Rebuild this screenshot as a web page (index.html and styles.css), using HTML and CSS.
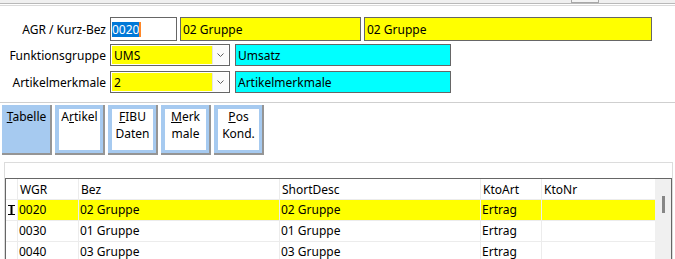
FILE: index.html
```html
<!DOCTYPE html>
<html>
<head>
<meta charset="utf-8">
<link rel="stylesheet" href="styles.css">
</head>
<body>
<div class="topbar"><div class="topthumb"></div></div>
<div class="topline"></div>

<div class="form">
  <div class="row r1">
    <div class="label">AGR / Kurz-Bez</div>
    <div class="edit code"><span class="sel">0020</span><span class="caret"></span></div>
    <div class="edit yellow w1">02 Gruppe</div>
    <div class="edit yellow w2">02 Gruppe</div>
  </div>
  <div class="row r2">
    <div class="label">Funktionsgruppe</div>
    <div class="combo">
      <div class="combo-val">UMS</div>
      <div class="combo-btn"><svg width="7" height="4" viewBox="0 0 7 4"><polyline points="0.5,0.5 3.5,3.5 6.5,0.5" fill="none" stroke="#606060" stroke-width="1"/></svg></div>
    </div>
    <div class="edit cyan">Umsatz</div>
  </div>
  <div class="row r3">
    <div class="label">Artikelmerkmale</div>
    <div class="combo">
      <div class="combo-val">2</div>
      <div class="combo-btn"><svg width="7" height="4" viewBox="0 0 7 4"><polyline points="0.5,0.5 3.5,3.5 6.5,0.5" fill="none" stroke="#606060" stroke-width="1"/></svg></div>
    </div>
    <div class="edit cyan">Artikelmerkmale</div>
  </div>
</div>

<div class="sep"></div>

<div class="tabs">
  <div class="btn active"><div class="btn-in"><u>T</u>abelle</div></div>
  <div class="btn"><div class="btn-in">A<u>r</u>tikel</div></div>
  <div class="btn"><div class="btn-in"><u>F</u>IBU<br>Daten</div></div>
  <div class="btn"><div class="btn-in"><u>M</u>erk<br>male</div></div>
  <div class="btn"><div class="btn-in"><u>P</u>os<br>Kond.</div></div>
</div>

<div class="gridwrap">
  <div class="grid">
    <div class="gcols">
      <div class="grow head">
        <div class="c ind"></div>
        <div class="c">WGR</div>
        <div class="c">Bez</div>
        <div class="c">ShortDesc</div>
        <div class="c">KtoArt</div>
        <div class="c last">KtoNr</div>
      </div>
      <div class="grow cur">
        <div class="c ind"><svg width="7" height="10" viewBox="0 0 7 10"><rect x="0" y="0" width="7" height="1" fill="#000"/><rect x="2.5" y="0" width="2" height="10" fill="#000"/><rect x="0" y="9" width="7" height="1" fill="#000"/></svg></div>
        <div class="c">0020</div>
        <div class="c">02 Gruppe</div>
        <div class="c">02 Gruppe</div>
        <div class="c">Ertrag</div>
        <div class="c last"></div>
      </div>
      <div class="grow">
        <div class="c ind"></div>
        <div class="c">0030</div>
        <div class="c">01 Gruppe</div>
        <div class="c">01 Gruppe</div>
        <div class="c">Ertrag</div>
        <div class="c last"></div>
      </div>
      <div class="grow">
        <div class="c ind"></div>
        <div class="c">0040</div>
        <div class="c">03 Gruppe</div>
        <div class="c">03 Gruppe</div>
        <div class="c">Ertrag</div>
        <div class="c last"></div>
      </div>
    </div>
    <div class="vscroll"><div class="thumb"></div></div>
  </div>
</div>
</body>
</html>
```

FILE: styles.css
```css
html, body {
  margin: 0;
  padding: 0;
  background: #ffffff;
  overflow: hidden;
}
body {
  font-family: "Noto Sans", "Liberation Sans", sans-serif;
  font-size: 12px;
  color: #000;
  width: 675px;
  height: 259px;
}

.topbar {
  height: 3px;
  background: #f0f0f0;
  border-bottom: 1px solid #b9b9b9;
  display: flex;
}
.topthumb {
  margin-left: 571px;
  width: 26px;
  height: 2px;
  border: 1px solid #a8a8a8;
  border-top: none;
  background: #f4f4f4;
}
.topline {
  margin-top: 1px;
  height: 1px;
  background: #dadada;
}

.form {
  padding-top: 11px;
}
.row {
  display: flex;
  align-items: center;
}
.r1 { height: 24px; }
.r2 { height: 22px; margin-top: 3px; }
.r3 { height: 22px; margin-top: 5px; }

.label {
  width: 106px;
  margin-right: 4px;
  text-align: right;
  white-space: nowrap;
}

.edit {
  box-sizing: border-box;
  height: 100%;
  border: 1px solid #666666;
  padding-left: 2px;
  display: flex;
  align-items: center;
  white-space: nowrap;
}
.code {
  width: 67px;
  background: #fff;
  padding-left: 1px;
}
.sel {
  background: #0078d7;
  color: #fff;
  line-height: 15px;
}
.caret {
  width: 2px;
  height: 15px;
  background: #ff8728;
}
.yellow { background: #ffff00; }
.w1 { width: 181px; margin-left: 3px; }
.w2 { width: 288px; margin-left: 3px; }

.combo {
  box-sizing: border-box;
  width: 120px;
  height: 100%;
  border: 1px solid #666666;
  padding: 1px;
  background: #fff;
  display: flex;
}
.combo-val {
  flex: 1;
  background: #ffff00;
  padding-left: 2px;
  display: flex;
  align-items: center;
}
.combo-btn {
  box-sizing: border-box;
  width: 16px;
  border-left: 1px solid #e3e3e3;
  background: #fbfbfb;
  display: flex;
  align-items: center;
  justify-content: center;
}
.cyan {
  width: 216px;
  margin-left: 5px;
  background: #00ffff;
}

.sep {
  margin-top: 9px;
  height: 1px;
  background: #cfcfcf;
}

.tabs {
  display: flex;
  gap: 3px;
  padding-left: 2px;
  margin-top: 2px;
}
.btn {
  box-sizing: border-box;
  width: 50px;
  height: 50px;
  background: #a6caf0;
  padding: 4px 3px 3px 4px;
  border-right: 2px solid #959595;
  border-bottom: 2px solid #959595;
  display: flex;
}
.btn-in {
  flex: 1;
  background: #fff;
  text-align: center;
  line-height: 16.5px;
  padding-top: 0;
}
.btn.active .btn-in {
  background: transparent;
}

.gridwrap {
  margin-top: 7px;
  margin-left: 4px;
  width: 669px;
  box-sizing: border-box;
  border: 1px solid #dcdcdc;
  border-bottom: none;
  padding-top: 15px;
  height: 97px;
  overflow: hidden;
}
.grid {
  box-sizing: border-box;
  border: 1px solid #666666;
  border-bottom: none;
  height: 100%;
  display: flex;
  overflow: hidden;
}
.gcols {
  width: 649px;
}
.grow {
  display: grid;
  grid-template-columns: 12px 61px 201px 201px 61px 113px;
  height: 20px;
  border-bottom: 1px solid #ececec;
}
.c {
  box-sizing: border-box;
  border-right: 1px solid #ececec;
  padding-left: 1px;
  line-height: 20px;
  white-space: nowrap;
  overflow: hidden;
}
.c.last { border-right: none; }
.head .c { padding-left: 2px; line-height: 22px; }
.ind {
  padding-left: 2px;
  display: flex;
  align-items: center;
}
.cur .c { background: #ffff00; }
.cur .c.ind { background: #fff; }

.vscroll {
  width: 16px;
  background: #f0f0f0;
  height: 100%;
}
.thumb {
  margin-left: 7px;
  margin-top: 17px;
  width: 3px;
  height: 17px;
  background: #868686;
}
```
